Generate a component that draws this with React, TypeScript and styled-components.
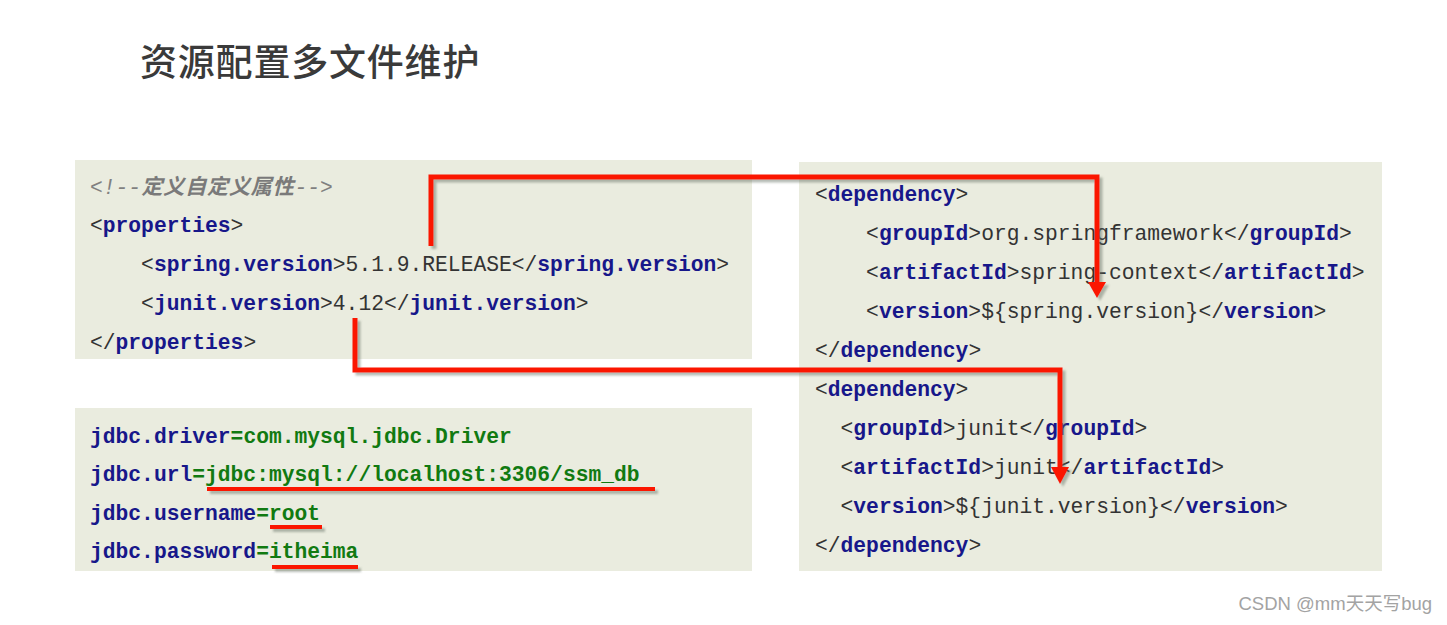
import React from "react";
import styled, { createGlobalStyle } from "styled-components";

const GlobalStyle = createGlobalStyle`
  html, body {
    margin: 0;
    padding: 0;
    background: #ffffff;
    width: 1447px;
    height: 625px;
    overflow: hidden;
  }
  * { box-sizing: border-box; }
`;

const Page = styled.div`
  position: relative;
  width: 1447px;
  height: 625px;
  padding-top: 36px;
  background: #ffffff;
  display: flex;
  flex-direction: column;
`;

const Title = styled.h1`
  margin: 0 0 0 140px;
  height: 48px;
  font-family: "Noto Sans CJK SC", "Noto Sans", sans-serif;
  font-size: 37px;
  line-height: 48px;
  font-weight: 500;
  color: #3a3a3a;
  letter-spacing: 0.8px;
`;

const Content = styled.div`
  display: flex;
  align-items: flex-start;
  gap: 47px;
  margin-top: 76px;
  padding-left: 75px;
`;

const LeftCol = styled.div`
  display: flex;
  flex-direction: column;
  gap: 49px;
  width: 677px;
`;

const CodeBox = styled.div<{ $h: number; $pt: number; $pl: number; $lh: number; $w?: number; $mt?: number }>`
  background: #eaecdf;
  height: ${(p) => p.$h}px;
  width: ${(p) => (p.$w ? `${p.$w}px` : "auto")};
  margin-top: ${(p) => p.$mt ?? 0}px;
  padding: ${(p) => p.$pt}px 0 0 ${(p) => p.$pl}px;
  font-family: "Liberation Mono", "Noto Sans CJK SC", monospace;
  font-size: 21.3px;
  line-height: ${(p) => p.$lh}px;
  color: #2e2e2e;
`;

const Line = styled.div<{ $indent?: number }>`
  white-space: pre;
  padding-left: ${(p) => (p.$indent ?? 0) * 0.6}em;
`;

const Punc = styled.span`
  color: #333333;
  font-weight: 400;
`;

const Tag = styled.span`
  color: #17178a;
  font-weight: 700;
`;

const Text = styled.span`
  color: #333333;
  font-weight: 400;
`;

const Key = styled.span`
  color: #17178a;
  font-weight: 700;
`;

const Green = styled.span`
  color: #117a11;
  font-weight: 700;
`;

const Comment = styled.span`
  color: #808080;
  font-style: italic;
`;

const CommentCjk = styled.span`
  color: #7a7a7a;
  font-style: italic;
  font-weight: 700;
  letter-spacing: 0.6px;
`;

const Footer = styled.div`
  margin-top: 23px;
  padding-right: 15px;
  text-align: right;
  font-family: "Liberation Sans", "Noto Sans CJK SC", sans-serif;
  font-size: 18.5px;
  line-height: 20px;
  color: #a3a3a3;
`;

const Overlay = styled.svg`
  position: absolute;
  top: 0;
  left: 0;
  width: 1447px;
  height: 625px;
  pointer-events: none;
`;

const Open = ({ name }: { name: string }) => (
  <>
    <Punc>&lt;</Punc>
    <Tag>{name}</Tag>
    <Punc>&gt;</Punc>
  </>
);

const Close = ({ name }: { name: string }) => (
  <>
    <Punc>&lt;/</Punc>
    <Tag>{name}</Tag>
    <Punc>&gt;</Punc>
  </>
);

const Elem = ({ name, value, indent }: { name: string; value: string; indent: number }) => (
  <Line $indent={indent}>
    <Open name={name} />
    <Text>{value}</Text>
    <Close name={name} />
  </Line>
);

const Prop = ({ k, v }: { k: string; v: string }) => (
  <Line>
    <Key>{k}</Key>
    <Green>=</Green>
    <Green>{v}</Green>
  </Line>
);

export default function App() {
  const red = "#fb1306";
  return (
    <>
      <GlobalStyle />
      <Page>
        <Title>资源配置多文件维护</Title>
        <Content>
          <LeftCol>
            <CodeBox $h={199} $pt={8.5} $pl={15} $lh={38.75}>
              <Line>
                <Comment>&lt;!--</Comment>
                <CommentCjk>定义自定义属性</CommentCjk>
                <Comment>--&gt;</Comment>
              </Line>
              <Line>
                <Open name="properties" />
              </Line>
              <Elem name="spring.version" value="5.1.9.RELEASE" indent={4} />
              <Elem name="junit.version" value="4.12" indent={4} />
              <Line>
                <Close name="properties" />
              </Line>
            </CodeBox>
            <CodeBox $h={163} $pt={10} $pl={15} $lh={38.3}>
              <Prop k="jdbc.driver" v="com.mysql.jdbc.Driver" />
              <Prop k="jdbc.url" v="jdbc:mysql://localhost:3306/ssm_db" />
              <Prop k="jdbc.username" v="root" />
              <Prop k="jdbc.password" v="itheima" />
            </CodeBox>
          </LeftCol>
          <CodeBox $h={409} $w={583} $mt={2} $pt={13.5} $pl={16} $lh={39}>
            <Line>
              <Open name="dependency" />
            </Line>
            <Elem name="groupId" value="org.springframework" indent={4} />
            <Elem name="artifactId" value="spring-context" indent={4} />
            <Elem name="version" value="${spring.version}" indent={4} />
            <Line>
              <Close name="dependency" />
            </Line>
            <Line>
              <Open name="dependency" />
            </Line>
            <Elem name="groupId" value="junit" indent={2} />
            <Elem name="artifactId" value="junit" indent={2} />
            <Elem name="version" value="${junit.version}" indent={2} />
            <Line>
              <Close name="dependency" />
            </Line>
          </CodeBox>
        </Content>
        <Footer>CSDN @mm天天写bug</Footer>
        <Overlay viewBox="0 0 1447 625">
          <defs>
            <filter id="sh" x="-5%" y="-5%" width="110%" height="120%">
              <feDropShadow dx="3" dy="3" stdDeviation="1.2" floodColor="#5f6b5f" floodOpacity="0.45" />
            </filter>
          </defs>
          <g filter="url(#sh)">
            <path d="M431 246 V177 H1097 V286" fill="none" stroke={red} strokeWidth={5} />
            <polygon points="1088,282 1106,282 1097,298" fill={red} />
            <path d="M355 318 V370 H1060 V470" fill="none" stroke={red} strokeWidth={5} />
            <polygon points="1051,467 1069,467 1060,484" fill={red} />
            <rect x="207" y="487" width="448" height="4" fill={red} />
            <rect x="270" y="525" width="52" height="4" fill={red} />
            <rect x="272" y="565" width="86" height="4" fill={red} />
          </g>
        </Overlay>
      </Page>
    </>
  );
}
